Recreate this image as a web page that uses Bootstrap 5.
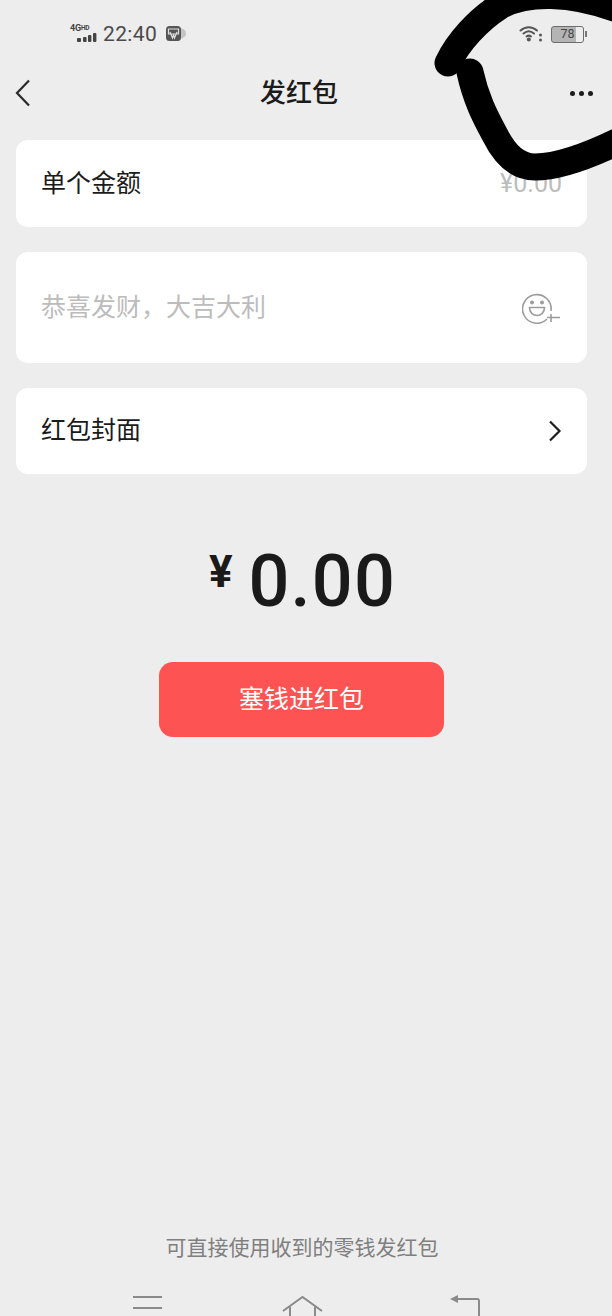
<!DOCTYPE html>
<html lang="zh">
<head>
<meta charset="utf-8">
<meta name="viewport" content="width=device-width, initial-scale=1">
<link href="https://cdn.jsdelivr.net/npm/bootstrap@5.3.0/dist/css/bootstrap.min.css" rel="stylesheet">
<style>
html,body{height:1316px;overflow:hidden}
body{background:#ededed;font-family:"Roboto","Noto Sans CJK SC",sans-serif;color:#1b1b1b}
.screen{height:1316px;overflow:hidden;position:relative}
.sbar{height:68px;padding:0 25px 0 70px}
.sig{width:28px;height:20px;flex:none}
.sig-t{font-size:9px;font-weight:700;line-height:9px;color:#444;letter-spacing:-.2px;white-space:nowrap}
.sig-t sup{font-size:6.5px;top:-.2em;vertical-align:baseline;position:relative}
.clock{font-size:21px;line-height:24px;color:#4a4a4a;margin-left:5px;letter-spacing:.35px}
.batt{width:33px;height:17px;border:1.5px solid #6d6d6d;border-radius:3px;font-size:12.5px;line-height:14px;text-align:center;color:#444;background:linear-gradient(90deg,#b4b4b4 78%,transparent 78%);position:relative}
.batt-cap{width:2px;height:6px;background:#777;margin-left:1px}
.topbar{height:50px;padding:0 18px 0 14px}
.ttl{font-size:26px;line-height:50px;font-weight:500;left:0;right:14px;text-align:center}
.dots{gap:4px;margin-right:1px}
.dots i{width:5px;height:5px;border-radius:50%;background:#1c1c1c;display:block}
.stack{padding:22px 25px 0 16px;gap:25px}
.row-card{background:#fff;border-radius:12px;padding:0 25px;font-size:25px;height:87px}
.row-card.tall{height:111px}
.row-card.low{height:86px}
.ph{color:#bcbcbc}
.amt-ph{font-size:25px;color:#bcbcbc}
.money{margin-top:68px;height:80px;padding-right:7px;font-weight:500;color:#1a1a1a}
.yen{font-size:44px;line-height:44px;margin:-21px 16px 0 0;font-weight:700}
.sum{font-size:72px;line-height:80px;letter-spacing:1.2px}
.pay{display:block;width:285px;height:75px;margin:40px 0 0 159px;background:#fd5353;border:0;border-radius:14px;color:#fff;font-size:25px;padding:0}
.pay:hover{background:#fd5353;color:#fff}
.hint{font-size:21px;line-height:28px;color:#7f7f7f;text-align:center;margin-top:auto;padding-bottom:54px;padding-right:8px}
.navs{left:0;top:1290px;width:612px;height:26px}
.scribble{left:0;top:0;pointer-events:none}
</style>
</head>
<body>
<div class="screen d-flex flex-column">
  <div class="sbar d-flex align-items-center justify-content-between">
    <div class="d-flex align-items-center">
      <div class="sig position-relative">
        <div class="sig-t">4G<sup>HD</sup></div>
        <svg width="28" height="10" viewBox="0 0 28 10" class="d-block"><g fill="#444"><rect x="7" y="5" width="4" height="4" rx="1"/><rect x="13" y="4" width="3.6" height="5" rx="1"/><rect x="18" y="2" width="3.4" height="7" rx="1"/><rect x="23" y="0" width="3.4" height="9" rx="1"/></g></svg>
      </div>
      <div class="clock">22:40</div>
      <svg width="24" height="16" viewBox="0 0 24 16" class="ms-2"><circle cx="16" cy="7.5" r="5" fill="#c4c4c4"/><rect x="1" y="0" width="15" height="15" rx="3.5" fill="#555"/><path d="M3.5 3h10v5h-10zM5 6l2.5 6 1-3 1 3L12 6" fill="none" stroke="#ddd" stroke-width="1.2"/></svg>
    </div>
    <div class="d-flex align-items-center">
      <svg width="24" height="18" viewBox="0 0 24 18"><g fill="none" stroke="#555" stroke-width="2" stroke-linecap="round"><path d="M1.5 5.5C6.500 1 13 1 18 5.500"/><path d="M4.500 8.500c3.500-3 7-3 10.500 0"/><path d="M7.500 11.500c1.500-1.200 3-1.200 4.500 0"/></g><circle cx="9.800" cy="14.500" r="2" fill="#555"/><circle cx="21.500" cy="10" r="1.500" fill="#555"/><circle cx="21.500" cy="15" r="1.500" fill="#555"/></svg>
      <div class="batt ms-2">78</div><div class="batt-cap"></div>
    </div>
  </div>
  <div class="topbar position-relative d-flex align-items-center justify-content-between">
    <svg width="18" height="28" viewBox="0 0 18 28"><path d="M15 1.500 3 14l12 12.500" fill="none" stroke="#2a2a2a" stroke-width="2.200"/></svg>
    <div class="ttl position-absolute">发红包</div>
    <div class="dots d-flex"><i></i><i></i><i></i></div>
  </div>
  <div class="stack d-flex flex-column">
    <div class="row-card d-flex align-items-center justify-content-between"><span>单个金额</span><span class="amt-ph">¥0.00</span></div>
    <div class="row-card tall d-flex align-items-center justify-content-between"><span class="ph">恭喜发财，大吉大利</span>
      <svg width="40" height="32" viewBox="0 0 40 32"><g fill="none" stroke="#9c9c9c" stroke-width="1.600"><path d="M29 19A14.300 14.300 0 1 0 25 27"/><path d="M7.500 15.500h15c0 5-3.500 8-7.500 8s-7.500-3-7.500-8z"/><path d="M29 25v8M25 28.500h13" transform="translate(0 -3)"/></g><circle cx="10" cy="10.500" r="2" fill="#9c9c9c"/><circle cx="20" cy="10.500" r="2" fill="#9c9c9c"/></svg>
    </div>
    <div class="row-card low d-flex align-items-center justify-content-between"><span>红包封面</span>
      <svg width="14" height="22" viewBox="0 0 14 22"><path d="M2 1.500 11.500 11 2 20.500" fill="none" stroke="#1f1f1f" stroke-width="2.200"/></svg>
    </div>
  </div>
  <div class="money d-flex justify-content-center align-items-center"><span class="yen">¥</span><span class="sum">0.00</span></div>
  <button type="button" class="pay btn">塞钱进红包</button>
  <div class="hint">可直接使用收到的零钱发红包</div>
  <svg class="navs position-absolute" viewBox="0 0 612 26"><g fill="none" stroke="#8a8a8a" stroke-width="2"><path d="M133 7h29M133 18h29"/><path d="M283 21 302.500 7 322 21M290 17v10M315 17v10"/><path d="M479 27V11q0-2-2-2H455"/></g><path d="M450 9l8-4v8z" fill="#8a8a8a"/></svg>
  <svg class="scribble position-absolute" width="612" height="190" viewBox="0 0 612 190"><g fill="none" stroke="#000" stroke-width="27" stroke-linecap="round" stroke-linejoin="round"><path d="M448 63C458 42 478 20 500 6C525-8 570-10 625 12"/><path d="M470 72C476 100 486 118 495 135C505 155 518 167 535 167C555 167 585 158 625 138"/></g></svg>
</div>
</body>
</html>
